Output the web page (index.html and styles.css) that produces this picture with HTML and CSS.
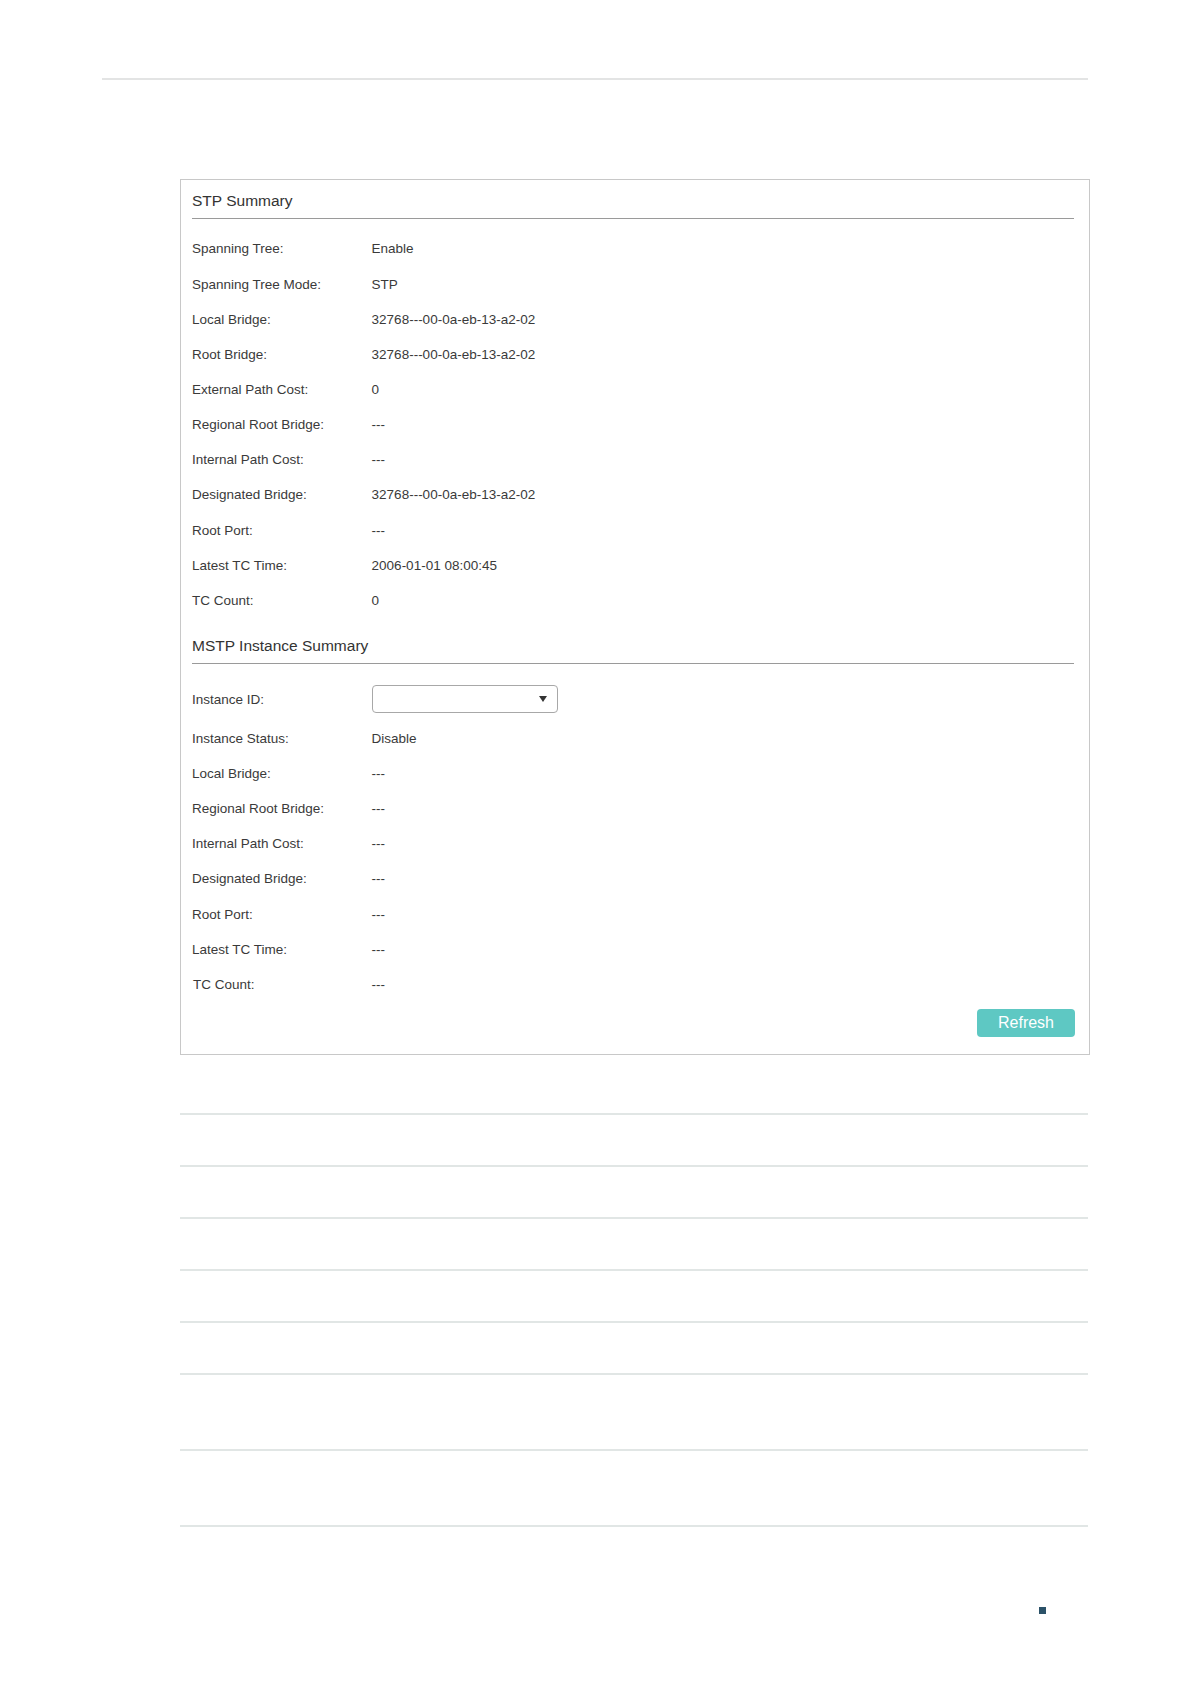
FILE: index.html
```html
<!DOCTYPE html>
<html lang="en">
<head>
<meta charset="utf-8">
<title>STP Summary</title>
<link rel="stylesheet" href="styles.css">
</head>
<body>
<div class="page">
  <div class="topline"></div>

  <div class="panel">
    <div class="section-title first">STP Summary</div>
    <div class="rows rows-first">
      <div class="row"><span class="label">Spanning Tree:</span><span class="value">Enable</span></div>
      <div class="row"><span class="label">Spanning Tree Mode:</span><span class="value">STP</span></div>
      <div class="row"><span class="label">Local Bridge:</span><span class="value">32768---00-0a-eb-13-a2-02</span></div>
      <div class="row"><span class="label">Root Bridge:</span><span class="value">32768---00-0a-eb-13-a2-02</span></div>
      <div class="row"><span class="label">External Path Cost:</span><span class="value">0</span></div>
      <div class="row"><span class="label">Regional Root Bridge:</span><span class="value">---</span></div>
      <div class="row"><span class="label">Internal Path Cost:</span><span class="value">---</span></div>
      <div class="row"><span class="label">Designated Bridge:</span><span class="value">32768---00-0a-eb-13-a2-02</span></div>
      <div class="row"><span class="label">Root Port:</span><span class="value">---</span></div>
      <div class="row"><span class="label">Latest TC Time:</span><span class="value">2006-01-01 08:00:45</span></div>
      <div class="row"><span class="label">TC Count:</span><span class="value">0</span></div>
    </div>

    <div class="section-title second">MSTP Instance Summary</div>
    <div class="rows rows-second">
      <div class="row row-select">
        <span class="label">Instance ID:</span>
        <span class="select">
          <svg class="caret" width="8" height="6" viewBox="0 0 8 6"><path d="M0 0 L8 0 L4 6 Z" fill="#333"/></svg>
        </span>
      </div>
      <div class="row"><span class="label">Instance Status:</span><span class="value">Disable</span></div>
      <div class="row"><span class="label">Local Bridge:</span><span class="value">---</span></div>
      <div class="row"><span class="label">Regional Root Bridge:</span><span class="value">---</span></div>
      <div class="row"><span class="label">Internal Path Cost:</span><span class="value">---</span></div>
      <div class="row"><span class="label">Designated Bridge:</span><span class="value">---</span></div>
      <div class="row"><span class="label">Root Port:</span><span class="value">---</span></div>
      <div class="row"><span class="label">Latest TC Time:</span><span class="value">---</span></div>
      <div class="row"><span class="label indent">TC Count:</span><span class="value">---</span></div>
    </div>

    <div class="actions">
      <button class="btn" type="button">Refresh</button>
    </div>
  </div>

  <div class="table-lines">
    <div class="tl tl-a"></div>
    <div class="tl tl-b"></div>
    <div class="tl tl-b"></div>
    <div class="tl tl-b"></div>
    <div class="tl tl-b"></div>
    <div class="tl tl-b"></div>
    <div class="tl tl-c"></div>
    <div class="tl tl-c"></div>
  </div>

  <div class="footer">
    <span class="square"></span>
  </div>
</div>
</body>
</html>
```

FILE: styles.css
```css
html, body {
  margin: 0;
  padding: 0;
  background: #ffffff;
}

body {
  font-family: "Liberation Sans", Arial, sans-serif;
  color: #333333;
}

.page {
  width: 1191px;
  padding-top: 78px;
}

.topline {
  margin-left: 102px;
  width: 986px;
  height: 2px;
  background: #e3e4e4;
}

.panel {
  margin-top: 99px;
  margin-left: 180px;
  width: 882px;
  border: 1px solid #c8c8c8;
  padding: 0 15px 17px 11px;
}

.section-title {
  font-size: 15.5px;
  line-height: 20px;
  color: #333333;
  border-bottom: 1px solid #9a9a9a;
  padding-bottom: 7px;
}

.section-title.first {
  padding-top: 11px;
}

.section-title.second {
  margin-top: 18px;
}

.rows-first {
  padding-top: 12.4px;
}

.rows-second {
  padding-top: 21.5px;
}

.row {
  display: flex;
  align-items: center;
  height: 35.15px;
  font-size: 13.5px;
}

.row-select {
  height: 28px;
  margin-bottom: 7.4px;
}

.label {
  width: 179.6px;
  flex: none;
  color: #3a3a3a;
}

.label.indent {
  padding-left: 1px;
  width: 178.6px;
}

.value {
  color: #3a3a3a;
}

.select {
  display: flex;
  align-items: center;
  justify-content: flex-end;
  box-sizing: border-box;
  width: 186px;
  height: 28px;
  border: 1px solid #a8a8a8;
  border-radius: 4px;
  padding-right: 10px;
  background: #ffffff;
}

.caret {
  display: block;
}

.actions {
  display: flex;
  justify-content: flex-end;
  padding-top: 7.4px;
  margin-right: -1px;
}

.btn {
  width: 98px;
  height: 28px;
  border: none;
  border-radius: 4px;
  background: #5ec8c3;
  color: #ffffff;
  font-family: "Liberation Sans", Arial, sans-serif;
  font-size: 16px;
  padding: 0;
  cursor: pointer;
}

.table-lines {
  margin-left: 180px;
  width: 908px;
}

.tl {
  border-bottom: 2px solid #e1e6e5;
}

.tl-a {
  height: 58px;
}

.tl-b {
  height: 50px;
}

.tl-c {
  height: 74px;
}

.footer {
  display: flex;
  justify-content: flex-end;
  width: 1046px;
  padding-top: 80px;
}

.square {
  display: block;
  width: 7px;
  height: 7px;
  background: #2b5268;
}
```
